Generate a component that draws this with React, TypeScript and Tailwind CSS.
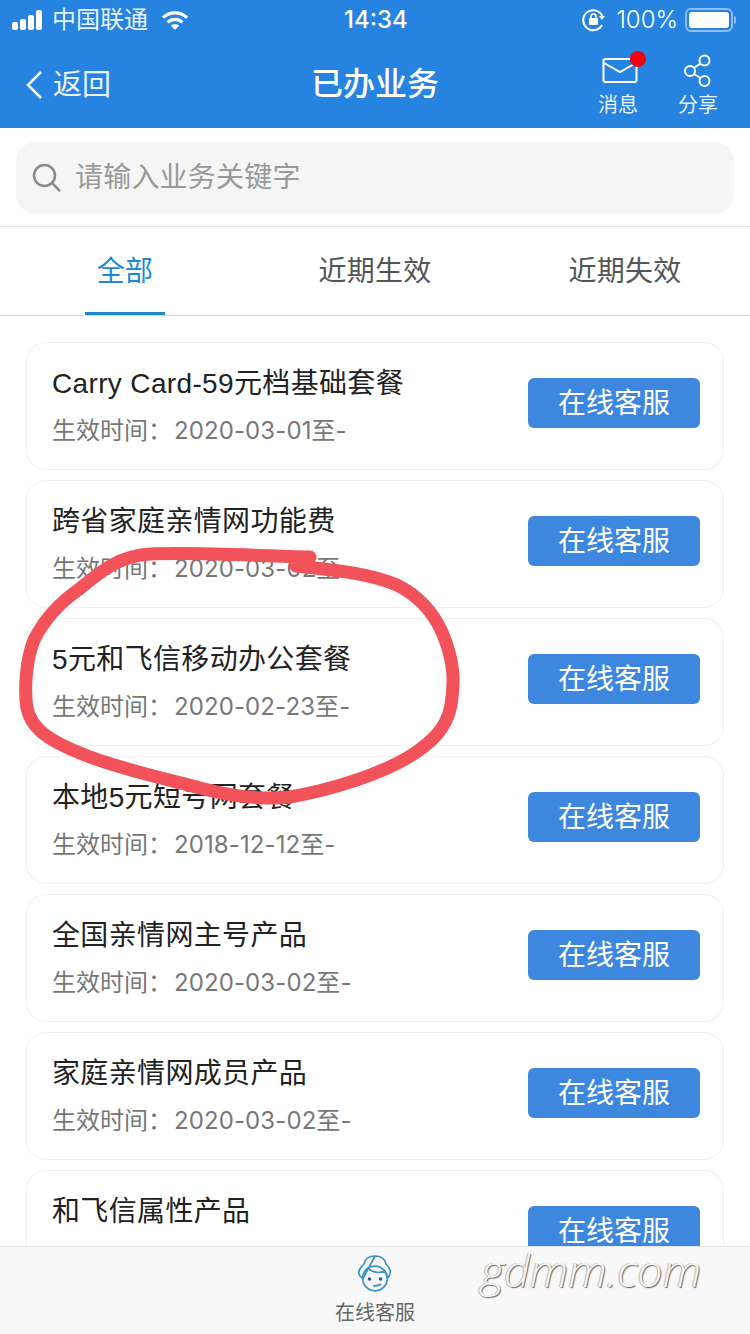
const font = { fontFamily: 'Inter, "Noto Sans CJK SC", "Noto Sans", sans-serif' };
const titleFont = { fontFamily: '"Liberation Sans", "Noto Sans CJK SC", sans-serif' };

const items = [
  ["Carry Card-59元档基础套餐", "2020-03-01至-"],
  ["跨省家庭亲情网功能费", "2020-03-02至-"],
  ["5元和飞信移动办公套餐", "2020-02-23至-"],
  ["本地5元短号网套餐", "2018-12-12至-"],
  ["全国亲情网主号产品", "2020-03-02至-"],
  ["家庭亲情网成员产品", "2020-03-02至-"],
  ["和飞信属性产品", "2020-03-02至-"],
];

function Card({ title, date }: { title: string; date: string }) {
  return (
    <div className="flex h-[128px] shrink-0 items-center justify-between rounded-[20px] border border-[#f0f0f0] bg-white pb-[6px] pl-[25px] pr-[23px]">
      <div className="flex flex-col pt-[8px]">
        <div className="h-[36px] text-[28px] leading-[36px] tracking-[0.35px] text-[#222]" style={titleFont}>{title}</div>
        <div className="mt-[11px] h-[36px] text-[24px] leading-[36px] text-[#777]">
          生效时间：<span className="ml-[2px] tracking-[0.1px]">{date}</span>
        </div>
      </div>
      <div className="flex h-[50px] w-[172px] items-center justify-center rounded-[6px] bg-[#3d87de] text-[28px] leading-[48px] text-white">在线客服</div>
    </div>
  );
}

export default function App() {
  return (
    <div className="relative flex h-[1334px] w-[750px] flex-col overflow-hidden bg-white" style={font}>
      <header className="h-[128px] shrink-0 bg-[#2683e0] text-white">
        <div className="relative flex h-[40px] items-center pl-[12px] pr-[14px]">
          <div className="flex items-end gap-[2px]">
            <span className="h-[8px] w-[6px] rounded-[2px] bg-white" />
            <span className="h-[11px] w-[6px] rounded-[2px] bg-white" />
            <span className="h-[15px] w-[6px] rounded-[2px] bg-white" />
            <span className="h-[20px] w-[6px] rounded-[2px] bg-white" />
          </div>
          <span className="ml-[10px] text-[24px] leading-[40px] text-[#e8f2fc]">中国联通</span>
          <svg className="ml-[13px]" width="28" height="21" viewBox="0 0 30 22" fill="none" stroke="white" strokeWidth="3.4">
            <path d="M2 8C9.5 1 20.5 1 28 8" />
            <path d="M7 13c4.800-4.300 11.200-4.300 16 0" />
            <path d="M15 21l-4.500-4.500c2.600-2 6.400-2 9 0z" fill="white" stroke="none" />
          </svg>
          <span className="absolute left-[344px] top-0 text-[24px] font-medium leading-[40px]">14:34</span>
          <div className="ml-auto flex items-center">
            <svg width="24" height="24" viewBox="0 0 24 24" fill="none" stroke="white" strokeWidth="2">
              <path d="M20.500 8.500A10 10 0 1 0 20 17" />
              <path d="M23 8l-3 4-3-4z" fill="white" stroke="none" />
              <rect x="7" y="10" width="9" height="7" rx="1" fill="white" stroke="none" />
              <path d="M9 10V8.500a2.500 2.500 0 0 1 5 0V10" strokeWidth="1.500" />
            </svg>
            <span className="ml-[10px] text-[24px] font-light leading-[40px]">100%</span>
            <div className="ml-[7px] flex h-[24px] w-[48px] items-center rounded-[6px] border-2 border-[#8dbdf0] p-[2px]">
              <div className="h-full w-full rounded-[3px] bg-white" />
            </div>
            <div className="ml-[1px] h-[8px] w-[2px] rounded-r bg-[#8dbdf0]" />
          </div>
        </div>
        <div className="relative flex h-[88px] items-center justify-center">
          <div className="absolute left-[25px] top-[25px] flex items-center">
            <svg width="18" height="30" viewBox="0 0 18 30" fill="none" stroke="white" strokeWidth="2.500">
              <path d="M16 2L3 15l13 13" />
            </svg>
            <span className="ml-[10px] text-[29px] leading-[40px] text-[#eaf3fc]">返回</span>
          </div>
          <span className="text-[32px] font-medium leading-[40px]">已办业务</span>
          <div className="absolute left-[598px] top-[17px] flex w-[40px] flex-col items-center">
            <svg className="ml-[3px]" width="36" height="27" viewBox="0 0 36 27" fill="none" stroke="white" strokeWidth="2">
              <rect x="1.500" y="2" width="33" height="23" rx="2" />
              <path d="M2 6l16 9 16-9" />
            </svg>
            <span className="mt-[7px] whitespace-nowrap text-[20px] leading-[28px] text-[#e8f2fc]">消息</span>
            <span className="absolute left-[32px] top-[-6px] h-[16px] w-[16px] rounded-full bg-[#f0000f]" />
          </div>
          <div className="absolute left-[678px] top-[14px] flex w-[40px] flex-col items-center">
            <svg width="30" height="34" viewBox="0 0 30 34" fill="none" stroke="white" strokeWidth="2">
              <circle cx="21.500" cy="6.500" r="5" />
              <circle cx="7" cy="17" r="5" />
              <circle cx="21.500" cy="27" r="5" />
              <path d="M11 14l6.500-4.500M11 20l6.500 4" />
            </svg>
            <span className="mt-[3px] whitespace-nowrap text-[20px] leading-[28px] text-[#e8f2fc]">分享</span>
          </div>
        </div>
      </header>

      <div className="h-[99px] shrink-0 border-b border-[#e4e4e4] px-[16px] pt-[14px]">
        <div className="flex h-[72px] items-center rounded-[20px] bg-[#f5f5f5] pl-[16px]">
          <svg width="30" height="30" viewBox="0 0 30 30" fill="none" stroke="#8a8a8a" strokeWidth="2.500">
            <circle cx="12.500" cy="12.500" r="10.500" />
            <path d="M20 20l8 8" />
          </svg>
          <span className="mb-[2px] ml-[13px] text-[28px] leading-[40px] tracking-[0.2px] text-[#999]">请输入业务关键字</span>
        </div>
      </div>

      <nav className="flex h-[89px] shrink-0 border-b border-[#d9d9d9]">
        <div className="flex flex-1 items-center justify-center text-[28px] tracking-[0.2px] text-[#1b8ad2]">
          <div className="relative flex h-[88px] w-[80px] items-center justify-center">
            全部
            <span className="absolute bottom-0 left-0 h-[3px] w-[80px] bg-[#1b8ad2]" />
          </div>
        </div>
        <div className="flex flex-1 items-center justify-center text-[28px] tracking-[0.2px] text-[#555]">近期生效</div>
        <div className="flex flex-1 items-center justify-center text-[28px] tracking-[0.2px] text-[#555]">近期失效</div>
      </nav>

      <main className="flex flex-col gap-[10px] px-[26px] pt-[26px]">
        {items.map(([t, d]) => (
          <Card key={t} title={t} date={d} />
        ))}
      </main>

      <footer className="absolute bottom-0 left-0 flex h-[88px] w-[750px] flex-col items-center border-t border-[#e2e2e2] bg-[#f8f8f8]">
        <svg className="mt-[8px]" width="34" height="37" viewBox="0 0 34 37" fill="none" stroke="#3b93c4" strokeWidth="1.700">
          <path d="M17 1c6 0 10 3 11 8 3 3 5 7 4 10-.5 2-1.500 3.500-3 4.500M5 23.500C3 22.500 1.500 21 1 19 0 15 3 12 6 9c1-5 5-8 11-8z" />
          <circle cx="17" cy="23.500" r="12.300" />
          <path d="M5 23c0-4 2-8 5-10 3 4 11 6 17 3 1 2 2 4 2 7" />
          <circle cx="11.500" cy="24" r="1.800" fill="#2c5e80" stroke="none" />
          <circle cx="22.500" cy="24" r="1.800" fill="#2c5e80" stroke="none" />
          <path d="M15 31c3 0 6-.5 8-2" />
        </svg>
        <span className="mt-[7px] text-[20px] leading-[28px] text-[#666]">在线客服</span>
      </footer>

      <svg className="pointer-events-none absolute left-0 top-0" width="750" height="1334" fill="none">
        <path
          d="M310 557C260 556 200 552 150 554C118 556 100 572 78 590C58 604 44 620 34 640C26 660 24 690 27 708C31 726 44 736 62 745C100 764 150 775 200 788C230 796 262 800 290 797C330 790 380 775 412 755C432 742 447 728 451 705C455 680 454 660 442 632C432 610 417 595 397 585C365 572 330 570 296 566"
          stroke="#f2535a"
          strokeWidth="13"
          strokeLinecap="round"
          strokeLinejoin="round"
        />
      </svg>

      <div
        className="absolute left-[481px] top-[1240px] text-[45px] italic leading-[60px] text-[#f4f4f4]"
        style={{ fontFamily: '"Open Sans", sans-serif', fontWeight: 300, textShadow: "1px 1px 1px #666, -1px 0 0 #bbb" }}
      >
        gdmm.com
      </div>
    </div>
  );
}
